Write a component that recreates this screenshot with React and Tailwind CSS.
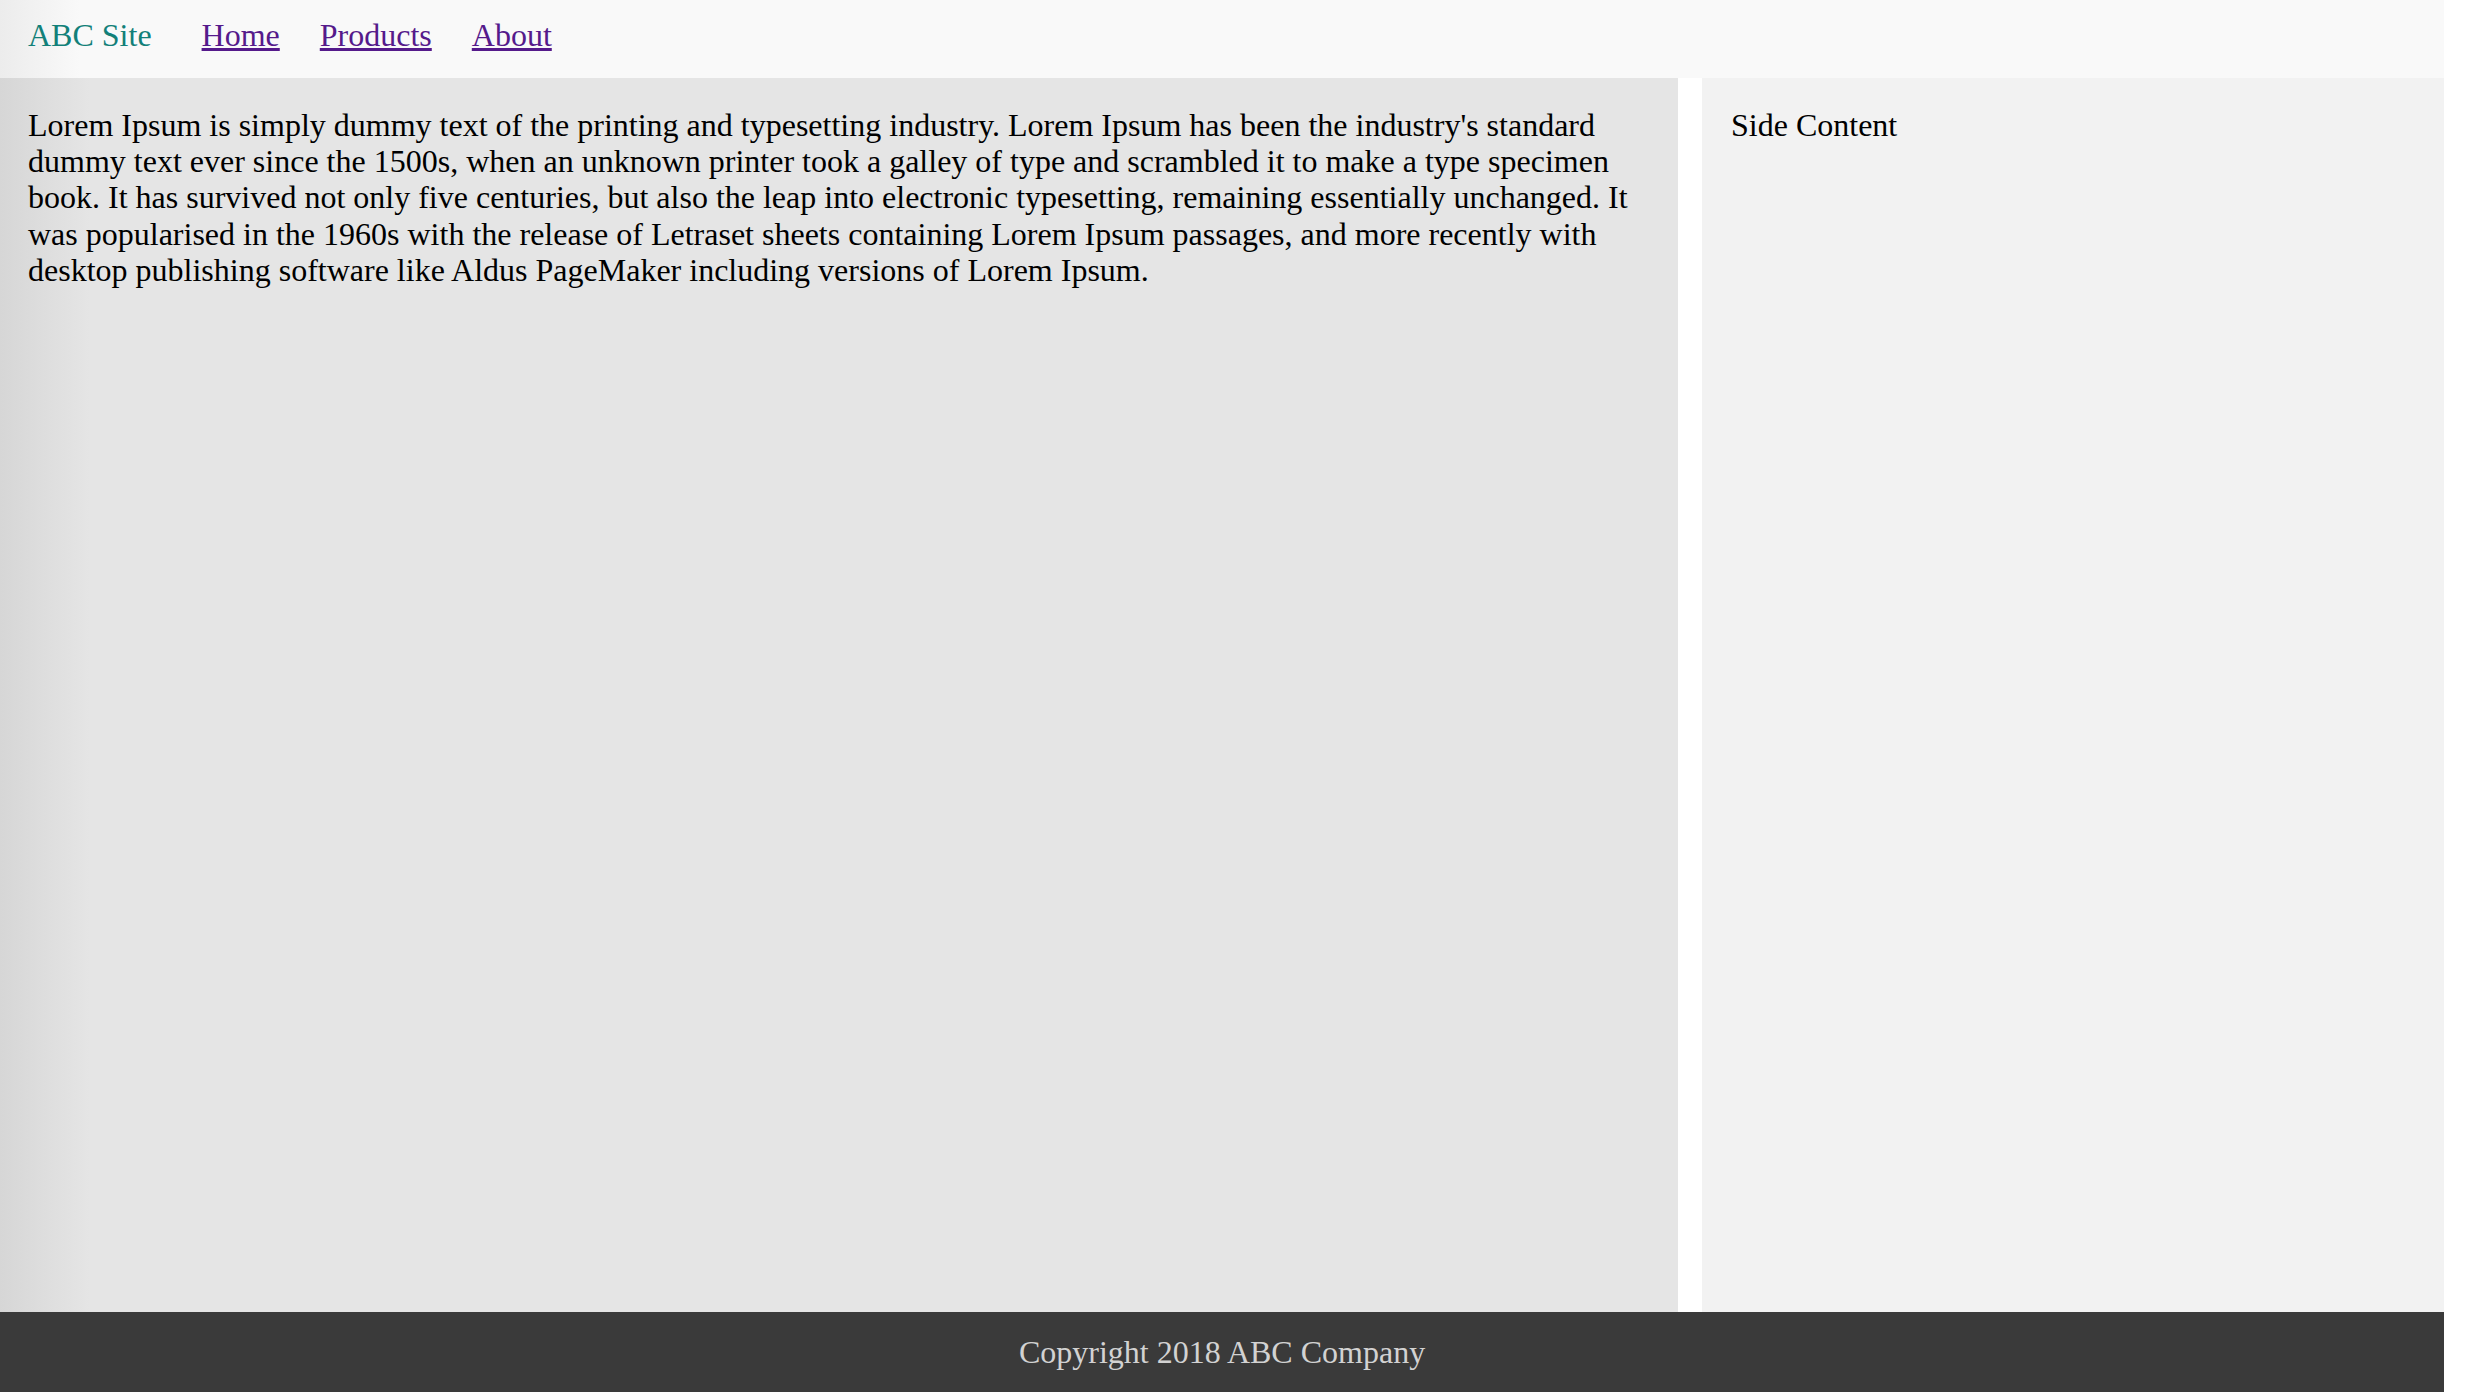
const NAV = ['Home', 'Products', 'About'];

const LOREM =
  "Lorem Ipsum is simply dummy text of the printing and typesetting industry. Lorem Ipsum has been the industry's standard dummy text ever since the 1500s, when an unknown printer took a galley of type and scrambled it to make a type specimen book. It has survived not only five centuries, but also the leap into electronic typesetting, remaining essentially unchanged. It was popularised in the 1960s with the release of Letraset sheets containing Lorem Ipsum passages, and more recently with desktop publishing software like Aldus PageMaker including versions of Lorem Ipsum.";

export default function App() {
  return (
    <div className="flex h-screen w-full bg-white font-['Liberation_Serif','Times_New_Roman',serif] text-[32px] text-black">
      <div className="flex h-full w-[2444px] flex-col">
        {/* header */}
        <header className="flex h-[78px] shrink-0 items-center bg-[linear-gradient(to_right,#ececec,#f9f9f9_80px)] px-[28px] pb-[9px]">
          <span className="mr-[50px] text-[#128079]">ABC Site</span>
          <nav className="flex gap-[40px]">
            {NAV.map((item) => (
              <a key={item} href="#" className="text-[#551a8b] underline">
                {item}
              </a>
            ))}
          </nav>
        </header>

        <div className="flex min-h-0 flex-1 gap-[24px]">
          <main className="flex-1 bg-[linear-gradient(to_right,#d6d6d6,#e5e5e5_90px)] px-[28px] pt-[29px]">
            <p className="leading-[36.2px]">{LOREM}</p>
          </main>
          <aside className="w-[742px] shrink-0 bg-[#f2f2f2] px-[29px] pt-[29px]">
            <p className="leading-[36.2px]">Side Content</p>
          </aside>
        </div>

        {/* footer */}
        <footer className="flex h-[80px] shrink-0 items-center justify-center bg-[#3a3a3a] text-[#d2d2d2]">
          Copyright 2018 ABC Company
        </footer>
      </div>
    </div>
  );
}
